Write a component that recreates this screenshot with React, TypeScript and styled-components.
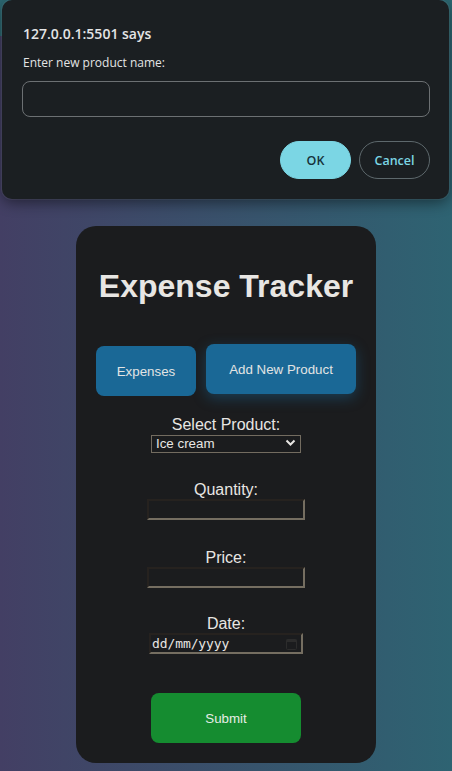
import React, { useState } from "react";
import styled, { createGlobalStyle } from "styled-components";

const GlobalStyle = createGlobalStyle`
  html, body {
    margin: 0;
    padding: 0;
  }
  body {
    font-family: Arial, "Liberation Sans", sans-serif;
    background: #2f6170;
  }
`;

const Page = styled.div`
  position: relative;
  width: 100%;
  min-height: 771px;
  display: flex;
  flex-direction: column;
  align-items: center;
  background: linear-gradient(to right, #433f64, #2e6372);
  overflow: hidden;
`;

const TopBand = styled.div`
  align-self: stretch;
  height: 36px;
  background: #2c6771;
`;

/* browser prompt sitting over the page */
const Dialog = styled.div`
  position: absolute;
  top: 0;
  left: 2px;
  width: 447px;
  box-sizing: border-box;
  padding: 24px 19px 20px 20px;
  background: #1b1f22;
  border-radius: 10px;
  box-shadow: 0 0 0 1px rgba(255, 255, 255, 0.06), 0 4px 14px rgba(0, 0, 0, 0.45);
  font-family: "Open Sans", "Noto Sans", sans-serif;
  color: #e3e4e5;
  z-index: 10;
`;

const DialogTitle = styled.div`
  font-size: 14px;
  font-weight: 600;
  line-height: 20px;
  padding-left: 1px;
`;

const DialogText = styled.div`
  margin-top: 10px;
  font-size: 12px;
  line-height: 18px;
  padding-left: 1px;
`;

const DialogInput = styled.input`
  display: block;
  margin-top: 9px;
  width: 100%;
  height: 36px;
  box-sizing: border-box;
  background: transparent;
  border: 1px solid #6c7073;
  border-radius: 8px;
  color: #e3e4e5;
  padding: 0 10px;
  outline: none;
`;

const DialogActions = styled.div`
  margin-top: 24px;
  display: flex;
  justify-content: flex-end;
  gap: 8px;
`;

const DialogButton = styled.button<{ $primary?: boolean }>`
  width: 71px;
  height: 38px;
  border-radius: 19px;
  font-family: "Open Sans", "Noto Sans", sans-serif;
  font-size: 12.5px;
  font-weight: 600;
  cursor: pointer;
  border: 1px solid ${(p) => (p.$primary ? "#7bd6e4" : "#5d686c")};
  background: ${(p) => (p.$primary ? "#7bd6e4" : "transparent")};
  color: ${(p) => (p.$primary ? "#16323a" : "#7bd6e4")};
`;

const Card = styled.div`
  margin-top: 190px;
  margin-bottom: 8px;
  width: 300px;
  box-sizing: border-box;
  padding: 20px 20px 20px;
  background: #1b1c1e;
  border-radius: 20px;
  display: flex;
  flex-direction: column;
  align-items: center;
  color: #e8e6e3;
`;

const Title = styled.h1`
  margin: 22px 0 0;
  font-size: 32px;
  line-height: 37px;
  font-weight: bold;
  color: #e8e6e3;
`;

const ButtonRow = styled.div`
  margin-top: 41px;
  align-self: stretch;
  display: flex;
  gap: 10px;
  align-items: flex-start;
`;

const TabButton = styled.button<{ $w: number; $raised?: boolean }>`
  width: ${(p) => p.$w}px;
  height: 50px;
  border: none;
  border-radius: 8px;
  background: #1a6896;
  color: #e2e4e4;
  font-family: Arial, "Liberation Sans", sans-serif;
  font-size: 13.333px;
  cursor: pointer;
  transform: ${(p) => (p.$raised ? "translateY(-2px)" : "none")};
  box-shadow: ${(p) => (p.$raised ? "0 4px 14px rgba(26, 104, 150, 0.45)" : "none")};
`;

const Field = styled.div<{ $gap: number }>`
  margin-top: ${(p) => p.$gap}px;
  display: flex;
  flex-direction: column;
  align-items: center;
`;

const Label = styled.label`
  font-size: 16px;
  line-height: 18px;
  color: #e8e6e3;
`;

const SelectWrap = styled.div`
  position: relative;
  width: 150px;
  height: 18px;
`;

const Select = styled.select`
  width: 150px;
  height: 18px;
  box-sizing: border-box;
  appearance: none;
  -webkit-appearance: none;
  background: #1b1c1e;
  border: 1px solid #736c60;
  border-radius: 0;
  color: #e8e6e3;
  font-family: Arial, "Liberation Sans", sans-serif;
  font-size: 13.333px;
  line-height: 16px;
  padding: 0 0 0 4px;
  outline: none;
`;

const Chevron = styled.svg`
  position: absolute;
  right: 5px;
  top: 5px;
  pointer-events: none;
`;

const TextInput = styled.input`
  display: block;
  width: 158px;
  height: 21px;
  box-sizing: border-box;
  background: #1b1c1e;
  border-style: solid;
  border-width: 2px;
  border-color: #26221f #756e61 #756e61 #26221f;
  color: #e8e6e3;
  padding: 1px 2px;
  font-size: 13.333px;
  outline: none;
`;

const DateBox = styled.div`
  width: 154px;
  height: 21px;
  box-sizing: border-box;
  display: flex;
  align-items: center;
  justify-content: space-between;
  border-style: solid;
  border-width: 2px;
  border-color: #26221f #756e61 #756e61 #26221f;
  padding: 0 4px 0 1px;
`;

const DateText = styled.span`
  font-family: "DejaVu Sans Mono", "Liberation Mono", monospace;
  font-size: 13px;
  color: #e8e6e3;
  letter-spacing: -0.1px;
`;

const SubmitButton = styled.button`
  margin-top: 39px;
  width: 150px;
  height: 50px;
  border: none;
  border-radius: 8px;
  background: #158c30;
  color: #e6ece6;
  font-family: Arial, "Liberation Sans", sans-serif;
  font-size: 13.333px;
  cursor: pointer;
`;

const App = () => {
  const [product, setProduct] = useState("Ice cream");

  return (
    <>
      <GlobalStyle />
      <Page>
        <TopBand />
        <Dialog>
          <DialogTitle>127.0.0.1:5501 says</DialogTitle>
          <DialogText>Enter new product name:</DialogText>
          <DialogInput />
          <DialogActions>
            <DialogButton $primary>OK</DialogButton>
            <DialogButton>Cancel</DialogButton>
          </DialogActions>
        </Dialog>

        <Card>
          <Title>Expense Tracker</Title>
          <ButtonRow>
            <TabButton $w={100}>Expenses</TabButton>
            <TabButton $w={150} $raised>
              Add New Product
            </TabButton>
          </ButtonRow>

          <Field $gap={20}>
            <Label>Select Product:</Label>
            <SelectWrap>
              <Select value={product} onChange={(e) => setProduct(e.target.value)}>
                <option>Ice cream</option>
                <option>Coffee</option>
                <option>Bread</option>
              </Select>
              <Chevron width="11" height="8" viewBox="0 0 11 8">
                <path d="M1.5 1.5 L5.5 5.5 L9.5 1.5" fill="none" stroke="#e8e6e3" strokeWidth="2" />
              </Chevron>
            </SelectWrap>
          </Field>

          <Field $gap={29}>
            <Label>Quantity:</Label>
            <TextInput type="number" />
          </Field>

          <Field $gap={29}>
            <Label>Price:</Label>
            <TextInput type="number" />
          </Field>

          <Field $gap={27}>
            <Label>Date:</Label>
            <DateBox>
              <DateText>dd/mm/yyyy</DateText>
              <svg width="11" height="12" viewBox="0 0 11 12">
                <rect x="0.5" y="1.5" width="10" height="10" rx="1" fill="none" stroke="#2c2c2c" />
                <rect x="0.5" y="1.5" width="10" height="2.5" fill="#2c2c2c" />
              </svg>
            </DateBox>
          </Field>

          <SubmitButton type="button">Submit</SubmitButton>
        </Card>
      </Page>
    </>
  );
};

export default App;
